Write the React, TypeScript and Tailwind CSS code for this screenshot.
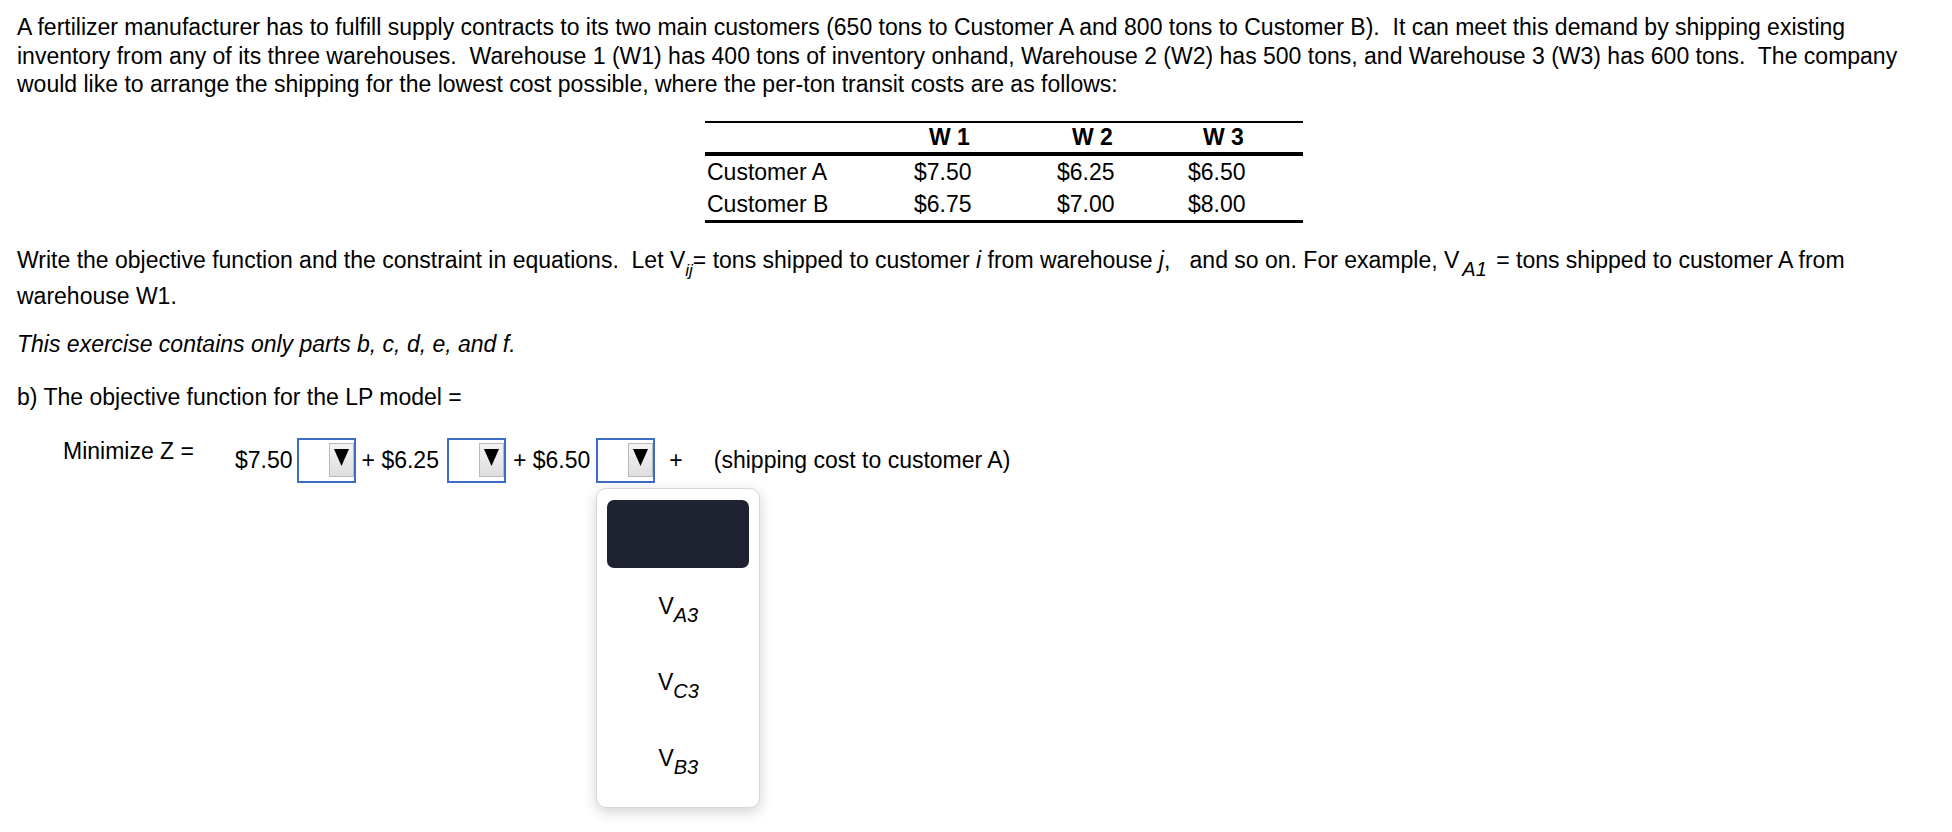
import type { FC, ReactNode } from 'react';

const Sub: FC<{ children: ReactNode; className?: string }> = ({ children, className }) => (
  <span className={`italic leading-[0] align-[-8px] ${className ?? 'text-[20px]'}`}>{children}</span>
);

const Drop: FC<{ open?: boolean }> = ({ open }) => (
  <div className="relative">
    <div className="w-[59px] h-[45px] border-2 border-[#3d6cc6] bg-white flex justify-end items-start pt-[3px]">
      <div className="w-[25px] h-[34px] border border-[#b9b9b9] bg-gradient-to-b from-[#f4f4f4] to-[#dedede] flex justify-center pt-[5px]">
        <svg width="15" height="17" viewBox="0 0 15 17">
          <polygon points="0,0 15,0 7.5,17" fill="#000" />
        </svg>
      </div>
    </div>

    {open && (
      <div className="absolute left-0 top-[50px] z-10 w-[164px] h-[320px] bg-white border border-[#d6d6d6] rounded-[10px] shadow-[0_4px_14px_rgba(0,0,0,0.18)] px-[10px] pt-[11px] flex flex-col gap-2">
        <div className="h-[68px] rounded-[7px] bg-[#1f2230]" />
        {['A3', 'C3', 'B3'].map(s => (
          <div key={s} className="h-[68px] flex items-center justify-center pb-[8px] leading-[28px]">
            <span>V<Sub>{s}</Sub></span>
          </div>
        ))}
      </div>
    )}
  </div>
);

const rows = [
  { name: 'Customer A', w: ['$7.50', '$6.25', '$6.50'] },
  { name: 'Customer B', w: ['$6.75', '$7.00', '$8.00'] },
];

export default function App() {
  return (
    <div className="min-h-screen bg-white text-black text-[23px] font-['Liberation_Sans',Arial,sans-serif] px-[17px] pt-[13px]">
      <p className="leading-[28.5px]">
        A fertilizer manufacturer has to fulfill supply contracts to its two main customers (650 tons to Customer A and 800 tons to Customer B).{'\u00a0'} It can meet this demand by shipping existing inventory from any of its three warehouses.{'\u00a0'} Warehouse 1 (W1) has 400 tons of inventory onhand, Warehouse 2 (W2) has 500 tons, and Warehouse 3 (W3) has 600 tons.{'\u00a0'} The company would like to arrange the shipping for the lowest cost possible, where the per-ton transit costs are as follows:
      </p>

      {/* cost table */}
      <div className="ml-[688px] mt-[22px] w-[598px] border-t-2 border-b-[3px] border-black leading-[28px]">
        <div className="grid grid-cols-[209px_143px_131px_1fr] h-[33px] items-center border-b-4 border-black font-bold">
          <span />
          <span className="pl-[15px]">W 1</span>
          <span className="pl-[15px]">W 2</span>
          <span className="pl-[15px]">W 3</span>
        </div>
        {rows.map(r => (
          <div key={r.name} className="grid grid-cols-[209px_143px_131px_1fr] h-[32px] items-center">
            <span className="pl-[2px]">{r.name}</span>
            {r.w.map((v, i) => (
              <span key={i}>{v}</span>
            ))}
          </div>
        ))}
      </div>

      <p className="mt-[19px] leading-[36px]">
        Write the objective function and the constraint in equations.{'\u00a0'} Let V<Sub className="text-[17px]">ij</Sub>= tons shipped to customer <i>i</i> from warehouse <i>j</i>,{'\u00a0\u00a0'} and so on. For example, V<Sub className="text-[20px] ml-[3px] mr-[3px]">A1</Sub> = tons shipped to customer A from warehouse W1.
      </p>

      <p className="mt-[16px] leading-[28.5px] italic">This exercise contains only parts b, c, d, e, and f.</p>

      <p className="mt-[25px] leading-[28.5px]">b) The objective function for the LP model =</p>

      <div className="mt-[25.5px] ml-[46px] flex items-start">
        <span className="w-[172px] leading-[28.5px]">Minimize Z =</span>
        <div className="flex items-center h-[45px] pt-[2px]">
          <span>$7.50</span>
          <div className="ml-[4px]"><Drop /></div>
          <span className="ml-[6px]">+ $6.25</span>
          <div className="ml-[8px]"><Drop /></div>
          <span className="ml-[7px]">+ $6.50</span>
          <div className="ml-[6px]"><Drop open /></div>
          <span className="ml-[14px]">+</span>
          <span className="ml-[31px]">(shipping cost to customer A)</span>
        </div>
      </div>
    </div>
  );
}
